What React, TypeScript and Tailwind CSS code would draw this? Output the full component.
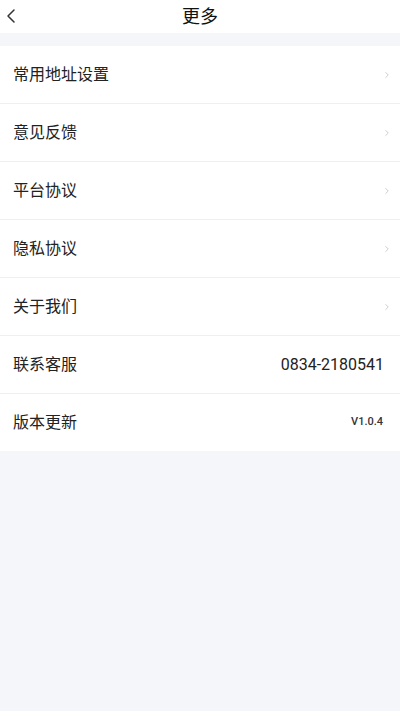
import { ChevronLeft, ChevronRight } from 'lucide-react';

const ITEMS: { label: string; value?: string; small?: boolean }[] = [
  { label: '常用地址设置' },
  { label: '意见反馈' },
  { label: '平台协议' },
  { label: '隐私协议' },
  { label: '关于我们' },
  { label: '联系客服', value: '0834-2180541' },
  { label: '版本更新', value: 'V1.0.4', small: true },
];

export default function App() {
  return (
    <div
      className="min-h-[711px] bg-[#f5f6fa] text-[#222]"
      style={{ fontFamily: 'Roboto, "Noto Sans CJK SC", sans-serif' }}
    >
      <div className="relative h-[33px] bg-white flex items-center justify-center">
        <ChevronLeft className="absolute -left-[1px] top-[4px] w-[24px] h-[24px] text-[#333]" strokeWidth={1.5} />
        <span className="text-[18px] text-[#111] leading-none">更多</span>
      </div>
      <div className="h-[13px]" />
      <div className="bg-white">
        {ITEMS.map((item, i) => (
          <div
            key={item.label}
            className={
              'flex items-center justify-between pl-[13px] pr-[17px] ' +
              (i < ITEMS.length - 1 ? 'h-[58px] border-b border-[#efeff2]' : 'h-[57px]')
            }
          >
            <span className="text-[16px] text-[#222]">{item.label}</span>
            {item.value ? (
              <span
                className={
                  item.small
                    ? 'text-[11px] text-[#333] mr-[0px] font-medium'
                    : 'text-[16px] text-[#222] -mr-[1px]'
                }
              >
                {item.value}
              </span>
            ) : (
              <ChevronRight className="w-[10px] h-[10px] text-[#c4c4c4] -mr-[9px]" strokeWidth={2} />
            )}
          </div>
        ))}
      </div>
    </div>
  );
}
